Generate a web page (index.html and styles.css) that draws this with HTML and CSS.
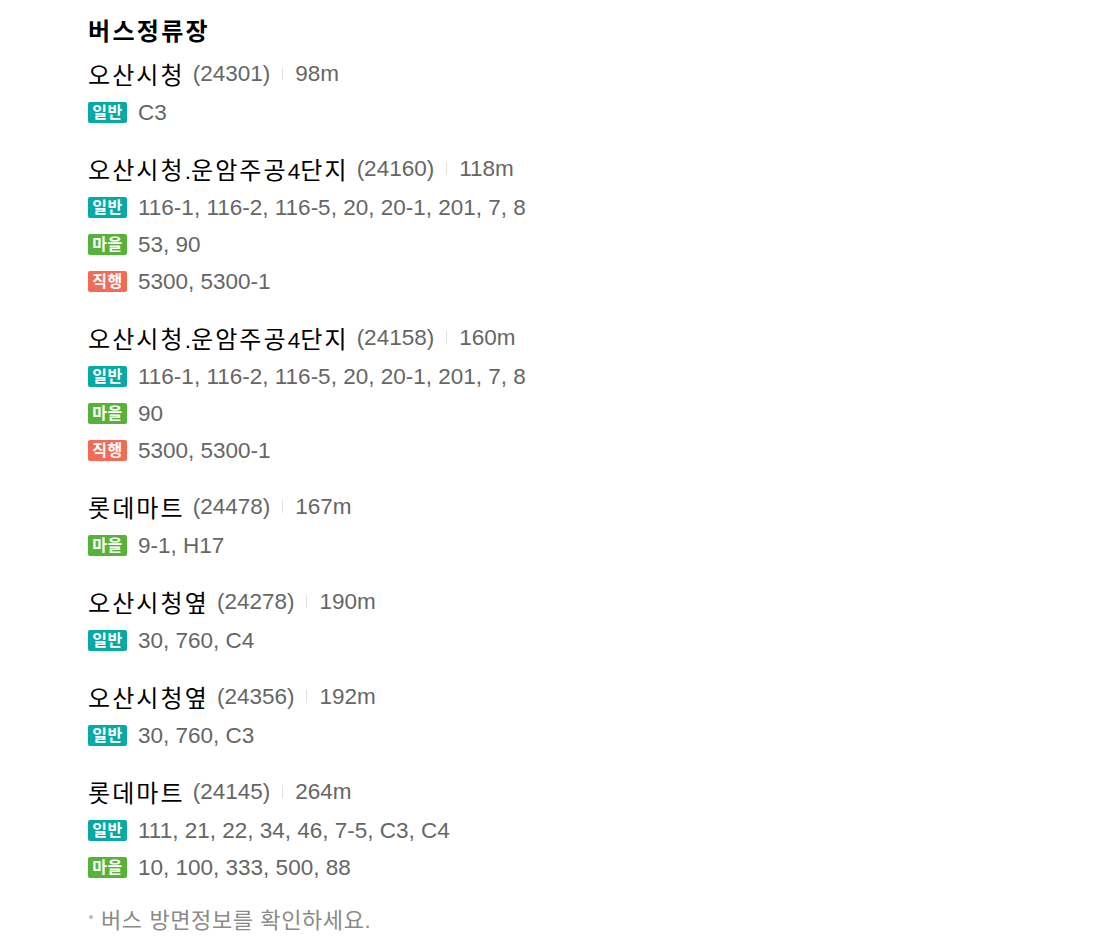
FILE: index.html
```html
<!DOCTYPE html>
<html lang="ko">
<head>
<meta charset="utf-8">
<title>버스정류장</title>
<link rel="stylesheet" href="styles.css">
</head>
<body>
<section class="bus">
  <h2 class="bus-title">버스정류장</h2>

  <div class="stop">
    <div class="stop-head"><span class="stop-name">오산시청</span><span class="stop-id">(24301)</span><span class="sep"></span><span class="stop-dist">98m</span></div>
    <div class="route"><span class="badge general">일반</span><span class="nums">C3</span></div>
  </div>

  <div class="stop">
    <div class="stop-head"><span class="stop-name">오산시청<span class="lat">.</span>운암주공<span class="lat">4</span>단지</span><span class="stop-id">(24160)</span><span class="sep"></span><span class="stop-dist">118m</span></div>
    <div class="route"><span class="badge general">일반</span><span class="nums">116-1, 116-2, 116-5, 20, 20-1, 201, 7, 8</span></div>
    <div class="route"><span class="badge village">마을</span><span class="nums">53, 90</span></div>
    <div class="route"><span class="badge express">직행</span><span class="nums">5300, 5300-1</span></div>
  </div>

  <div class="stop">
    <div class="stop-head"><span class="stop-name">오산시청<span class="lat">.</span>운암주공<span class="lat">4</span>단지</span><span class="stop-id">(24158)</span><span class="sep"></span><span class="stop-dist">160m</span></div>
    <div class="route"><span class="badge general">일반</span><span class="nums">116-1, 116-2, 116-5, 20, 20-1, 201, 7, 8</span></div>
    <div class="route"><span class="badge village">마을</span><span class="nums">90</span></div>
    <div class="route"><span class="badge express">직행</span><span class="nums">5300, 5300-1</span></div>
  </div>

  <div class="stop">
    <div class="stop-head"><span class="stop-name">롯데마트</span><span class="stop-id">(24478)</span><span class="sep"></span><span class="stop-dist">167m</span></div>
    <div class="route"><span class="badge village">마을</span><span class="nums">9-1, H17</span></div>
  </div>

  <div class="stop">
    <div class="stop-head"><span class="stop-name">오산시청옆</span><span class="stop-id">(24278)</span><span class="sep"></span><span class="stop-dist">190m</span></div>
    <div class="route"><span class="badge general">일반</span><span class="nums">30, 760, C4</span></div>
  </div>

  <div class="stop">
    <div class="stop-head"><span class="stop-name">오산시청옆</span><span class="stop-id">(24356)</span><span class="sep"></span><span class="stop-dist">192m</span></div>
    <div class="route"><span class="badge general">일반</span><span class="nums">30, 760, C3</span></div>
  </div>

  <div class="stop">
    <div class="stop-head"><span class="stop-name">롯데마트</span><span class="stop-id">(24145)</span><span class="sep"></span><span class="stop-dist">264m</span></div>
    <div class="route"><span class="badge general">일반</span><span class="nums">111, 21, 22, 34, 46, 7-5, C3, C4</span></div>
    <div class="route"><span class="badge village">마을</span><span class="nums">10, 100, 333, 500, 88</span></div>
  </div>

  <p class="note">버스 방면정보를 확인하세요.</p>
</section>
</body>
</html>
```

FILE: styles.css
```css
html, body {
  margin: 0;
  padding: 0;
  background: #ffffff;
}

body {
  font-family: "Liberation Sans", "Noto Sans CJK KR", sans-serif;
  color: #666666;
}

.bus {
  padding: 14px 0 0 88px;
}

.bus-title {
  margin: 0;
  font-size: 24px;
  font-weight: 700;
  color: #000000;
  line-height: 36px;
  letter-spacing: 2.3px;
}

.stop {
  margin-top: 17px;
}

.stop:first-of-type {
  margin-top: 3px;
}

.stop-head {
  display: flex;
  align-items: center;
  height: 41px;
  font-size: 22.5px;
}

.stop-name {
  color: #000000;
  font-size: 24px;
  letter-spacing: 2.1px;
}

.stop-name .lat {
  font-size: 22.5px;
  letter-spacing: 0;
}

.stop-id {
  margin-left: 8px;
  color: #666666;
}

.sep {
  width: 1px;
  height: 13px;
  background: #e2e2e2;
  margin: 0 12px;
}

.stop-dist {
  color: #666666;
}

.route {
  display: flex;
  align-items: center;
  height: 37px;
}

.badge {
  display: inline-flex;
  align-items: center;
  justify-content: center;
  width: 39px;
  height: 21px;
  border-radius: 2px;
  color: #ffffff;
  font-size: 16px;
  font-weight: 700;
  letter-spacing: 0.5px;
  line-height: 1;
  margin-right: 11px;
}

.badge.general { background: #06aaa5; }
.badge.village { background: #56b33a; }
.badge.express { background: #f26b55; }

.nums {
  font-size: 22.5px;
  color: #666666;
}

.note {
  margin: 21px 0 0;
  font-size: 22px;
  letter-spacing: 0.6px;
  color: #8a8a8a;
  line-height: 28px;
  display: flex;
  align-items: center;
}

.note::before {
  content: "";
  width: 4px;
  height: 4px;
  border-radius: 50%;
  background: #bdbdbd;
  margin: 0 8px 8px 1px;
}
```
